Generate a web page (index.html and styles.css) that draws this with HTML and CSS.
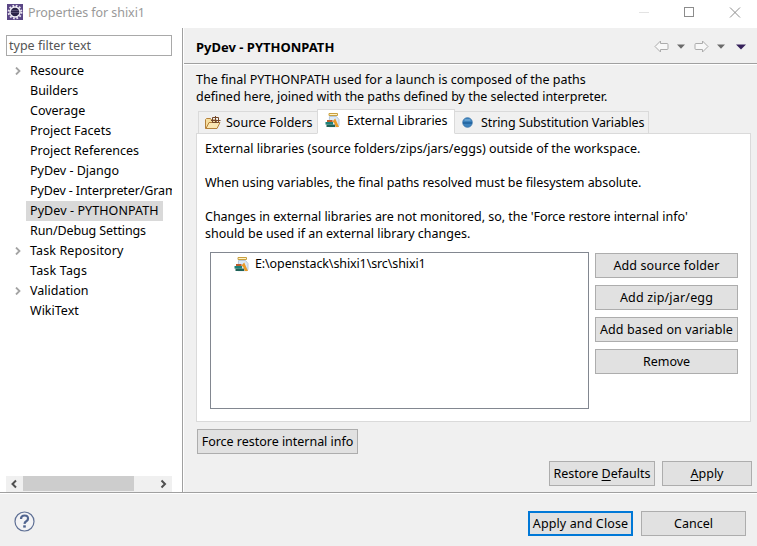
FILE: index.html
```html
<!DOCTYPE html>
<html lang="en">
<head>
<meta charset="utf-8">
<title>Properties for shixi1</title>
<link rel="stylesheet" href="styles.css">
</head>
<body>
<svg class="defs" width="0" height="0">
  <symbol id="jar" viewBox="0 0 15 16">
    <path d="M4.500 4.500h7l2.500 3v6.200l-1.200 1H4z" fill="#dce9f6" stroke="#a9bdd2" stroke-width=".8"/>
    <path d="M4 1.500h8.500v2H4z" fill="#fff3c4" stroke="#c9a040"/>
    <path d="M7.500 9.500 10.200 6.500 14 15h-3.200L9.200 11z" fill="#e99a26"/>
    <path d="M2 8h5.500v2H2z" fill="#bd5b2b"/>
    <path d="M.5 10h7.500v2.600H.5z" fill="#1d8178"/>
    <path d="M1.500 12.600h8.500v2.400H1.500z" fill="#1e6257"/>
  </symbol>
  <symbol id="arrow" viewBox="0 0 15 13">
    <path d="M1 6.500 6.500 1v2.500H13q1 0 1 1v4q0 1-1 1H6.500V12z" fill="#f8f8f8" stroke="#acacac" stroke-linejoin="round"/>
  </symbol>
  <symbol id="chevron" viewBox="0 0 6 8">
    <path d="M1 .5 4.500 4 1 7.500" fill="none" stroke="#a3a3a3" stroke-width="1.800"/>
  </symbol>
</svg>

<header class="titlebar">
  <svg class="app-icon" width="16" height="16" viewBox="0 0 16 16">
    <rect width="16" height="16" fill="#5a4685"/>
    <circle cx="8" cy="8" r="6.400" fill="none" stroke="#e9e6f0" stroke-width="2" stroke-dasharray="1.700 1.650"/>
    <circle cx="8" cy="8" r="5" fill="#2b2447" stroke="#f4f2f8" stroke-width="1.300"/>
    <path d="M4 6.500h8M4 8.500h8" stroke="#635a7d" stroke-width=".8"/>
  </svg>
  <span class="title">Properties for shixi1</span>
  <svg class="controls" width="102" height="11" viewBox="0 0 102 11" fill="none">
    <path d="M0 5.500h10" stroke="#e3e3e3"/>
    <rect x="45.500" y=".5" width="9" height="9" stroke="#8c8c8c"/>
    <path d="M91 .5l10 10M101 .5l-10 10" stroke="#8c8c8c"/>
  </svg>
</header>

<main class="body">
  <nav class="sidebar">
    <div class="filter">type filter text</div>
    <ul class="tree">
      <li><svg class="chev"><use href="#chevron"/></svg><span>Resource</span></li>
      <li><span>Builders</span></li>
      <li><span>Coverage</span></li>
      <li><span>Project Facets</span></li>
      <li><span>Project References</span></li>
      <li><span>PyDev - Django</span></li>
      <li><span class="n1">PyDev - Interpreter/Grammar</span></li>
      <li><span class="w05 selected">PyDev - PYTHONPATH</span></li>
      <li><span class="n1">Run/Debug Settings</span></li>
      <li><svg class="chev"><use href="#chevron"/></svg><span class="w1">Task Repository</span></li>
      <li><span class="w2">Task Tags</span></li>
      <li><svg class="chev"><use href="#chevron"/></svg><span>Validation</span></li>
      <li><span>WikiText</span></li>
    </ul>
    <div class="scrollbar">
      <svg width="17" height="16" viewBox="0 0 17 16"><path d="M10 4.500 6.500 8 10 11.500" fill="none" stroke="#505050" stroke-width="2"/></svg>
      <div class="thumb"></div>
      <svg width="17" height="16" viewBox="0 0 17 16"><path d="M6.500 4.500 10 8l-3.500 3.500" fill="none" stroke="#505050" stroke-width="2"/></svg>
    </div>
  </nav>

  <section class="page">
    <div class="page-head">
      <h1>PyDev - PYTHONPATH</h1>
      <div class="nav">
        <svg width="15" height="13"><use href="#arrow"/></svg>
        <svg class="drop" width="8" height="5" viewBox="0 0 8 5"><path d="M0 .5h8L4 4.700z" fill="#6a6a6a"/></svg>
        <svg class="fwd" width="15" height="13"><use href="#arrow"/></svg>
        <svg class="drop" width="8" height="5" viewBox="0 0 8 5"><path d="M0 .5h8L4 4.700z" fill="#6a6a6a"/></svg>
        <svg class="menu" width="10" height="6" viewBox="0 0 10 6"><path d="M0 .5h10L5 5.500z" fill="#35205a"/></svg>
      </div>
    </div>

    <div class="content">
      <p class="desc"><span>The final PYTHONPATH used for a launch is composed of the paths</span><br><span class="n02">defined here, joined with the paths defined by the selected interpreter.</span></p>

      <div class="tabs">
        <div class="tab tab-source">
          <svg width="16" height="14" viewBox="0 0 16 14">
            <path d="M.5 12.500V3.500l1-1h4l1 1.500h5v8.500z" fill="#f7dfa0" stroke="#b5813a"/>
            <path d="M1 12.500 4 6.500h11l-3 6z" fill="#fbe7b2" stroke="#b5813a"/>
            <path d="M7.500 1.500h6v5h-6zM10.500 0v7M6 4.500h9.500" fill="none" stroke="#75492a"/>
          </svg>
          <span>Source Folders</span>
        </div>
        <div class="tab tab-active">
          <svg width="15" height="16"><use href="#jar"/></svg>
          <span class="n1">External Libraries</span>
        </div>
        <div class="tab tab-vars">
          <svg width="11" height="11" viewBox="0 0 11 11">
            <circle cx="5.500" cy="5.500" r="4.800" fill="#3c82bd" stroke="#3a74a8" stroke-width=".8"/>
            <path d="M2.500 3h6" stroke="#6fa8d6" stroke-width="1.500"/>
            <path d="M1 6h9" stroke="#1f609c" stroke-width="1.500"/>
          </svg>
          <span class="n1">String Substitution Variables</span>
        </div>
      </div>

      <div class="panel">
        <p class="info"><span class="w02">External libraries (source folders/zips/jars/eggs) outside of the workspace.</span><br><br><span class="n05">When using variables, the final paths resolved must be filesystem absolute.</span><br><br><span class="n02">Changes in external libraries are not monitored, so, the 'Force restore internal info'</span><br><span class="n02">should be used if an external library changes.</span></p>
        <div class="libs">
          <div class="list">
            <div class="entry"><svg width="15" height="16"><use href="#jar"/></svg><span class="n1">E:\openstack\shixi1\src\shixi1</span></div>
          </div>
          <div class="actions">
            <div class="btn w1">Add source folder</div>
            <div class="btn w2">Add zip/jar/egg</div>
            <div class="btn w1">Add based on variable</div>
            <div class="btn">Remove</div>
          </div>
        </div>
      </div>

      <div class="btn force n02">Force restore internal info</div>
      <div class="page-actions">
        <div class="btn restore"><span>Restore <u>D</u>efaults</span></div>
        <div class="btn apply"><span><u>A</u>pply</span></div>
      </div>
    </div>
  </section>
</main>

<footer class="footer">
  <svg class="help" width="21" height="21" viewBox="0 0 21 21">
    <circle cx="10.500" cy="10.500" r="9.500" fill="#f3f3f5" stroke="#5f7095" stroke-width="1.200"/>
    <path d="M7 8q0-3.500 3.600-3.500T14 7.700q0 1.500-1.700 2.500t-1.800 2.700" fill="none" stroke="#50648f" stroke-width="2.200"/>
    <rect x="9.200" y="14.300" width="2.600" height="2.300" fill="#50648f"/>
  </svg>
  <div class="footer-actions">
    <div class="btn primary w1">Apply and Close</div>
    <div class="btn">Cancel</div>
  </div>
</footer>
</body>
</html>
```
FILE: styles.css
```css
* { box-sizing: border-box; }
body {
  margin: 0;
  width: 757px;
  height: 546px;
  display: flex;
  flex-direction: column;
  overflow: hidden;
  background: #fff;
  color: #000;
  font: 12.5px/17px "Noto Sans", "Open Sans", sans-serif;
  white-space: nowrap;
}
svg { display: block; flex: none; }
.defs { position: absolute; }
p, h1, ul { margin: 0; padding: 0; }

/* letter-spacing steps */
.w02 { letter-spacing: 0.02px; }
.w05 { letter-spacing: 0.08px; }
.w1 { letter-spacing: 0.12px; }
.w2 { letter-spacing: 0.18px; }
.n02 { letter-spacing: -0.025px; }
.n05 { letter-spacing: -0.06px; }
.n1 { letter-spacing: -0.11px; }

.titlebar {
  height: 28px;
  padding: 0 16px 3px 7px;
  display: flex;
  align-items: center;
  color: #999;
}
.app-icon { margin-top: -1px; }
.title { margin-left: 5px; letter-spacing: -0.06px; }
.controls { margin-left: auto; }

.body { height: 464px; display: flex; }
.sidebar {
  width: 183px;
  border-right: 1px solid #a0a0a0;
  padding: 7px 10px 0 6px;
  display: flex;
  flex-direction: column;
}
.filter {
  height: 21px;
  border: 1px solid #a9a9a9;
  padding: 1px 2px;
  color: #555;
}
.tree {
  list-style: none;
  margin-top: 5px;
  width: 166px;
  overflow: hidden;
}
.tree li {
  height: 20px;
  line-height: 20px;
  padding-left: 20px;
  position: relative;
}
.tree span { display: inline-block; padding: 0 4px; }
.tree .selected { width: 137px; background: #d9d9d9; }
.chev { position: absolute; left: 9px; top: 6px; width: 6px; height: 8px; }
.scrollbar {
  margin-top: auto;
  height: 16px;
  background: #f0f0f0;
  display: flex;
  justify-content: space-between;
}
.thumb { width: 111px; height: 15px; margin-right: auto; background: #cdcdcd; }

.page {
  flex: 1;
  margin-left: 1px;
  background: #f0f0f0;
  display: flex;
  flex-direction: column;
}
.page-head {
  height: 36px;
  border-bottom: 1px solid #a0a0a0;
  padding: 2px 11px 0 12px;
  display: flex;
  align-items: center;
  justify-content: space-between;
}
h1 { font-size: 13px; line-height: 17px; padding-top: 2px; }
.nav { display: flex; align-items: center; }
.drop { margin: 0 9px 0 8px; }
.fwd { transform: scaleX(-1); }
.menu { margin-left: 2px; }

.content {
  flex: 1;
  border-top: 1px solid #fff;
  padding: 6px 5px 0 12px;
  display: flex;
  flex-direction: column;
}
.tabs {
  margin: 4px 0 -1px 2px;
  height: 25px;
  display: flex;
  align-items: flex-end;
}
.tab {
  height: 23px;
  border: 1px solid #dadada;
  display: flex;
  align-items: center;
}
.tab-source { width: 120px; padding-left: 6px; gap: 5px; }
.tab-active {
  position: relative;
  width: 138px;
  height: 25px;
  margin-left: -1px;
  padding: 0 0 3px 7px;
  gap: 7px;
  background: #fff;
  border-bottom-color: #fff;
}
.tab-vars { width: 195px; margin-left: -1px; padding-left: 7px; gap: 8px; }
.panel {
  width: 555px;
  height: 289px;
  border: 1px solid #dadada;
  background: #fff;
  padding: 6px 12px 0 13px;
}
.info { margin-left: -5px; }
.libs { margin-top: 10px; display: flex; gap: 6px; }
.list { width: 379px; height: 157px; border: 1px solid #828790; padding: 2px 0 0 23px; }
.entry { display: flex; align-items: center; gap: 6px; }
.actions { width: 143px; margin-top: 1px; display: flex; flex-direction: column; gap: 7px; }
.btn {
  height: 25px;
  border: 1px solid #adadad;
  background: #e1e1e1;
  display: flex;
  align-items: center;
  justify-content: center;
}
.btn u { text-underline-offset: 2px; }
.force { width: 161px; margin: 7px 0 0 1px; }
.page-actions { margin-top: 7px; display: flex; justify-content: flex-end; gap: 7px; }
.restore { width: 106px; }
.apply { width: 90px; }

.footer {
  height: 54px;
  border-top: 1px solid #a0a0a0;
  box-shadow: inset 0 1px #fff;
  background: #f0f0f0;
  padding: 2px 11px 0 14px;
  display: flex;
  align-items: center;
  justify-content: space-between;
}
.help { margin-top: 1px; }
.footer-actions { display: flex; gap: 8px; padding-top: 6px; }
.footer-actions .btn { width: 105px; }
.btn.primary { border: 2px solid #0078d7; }
```
